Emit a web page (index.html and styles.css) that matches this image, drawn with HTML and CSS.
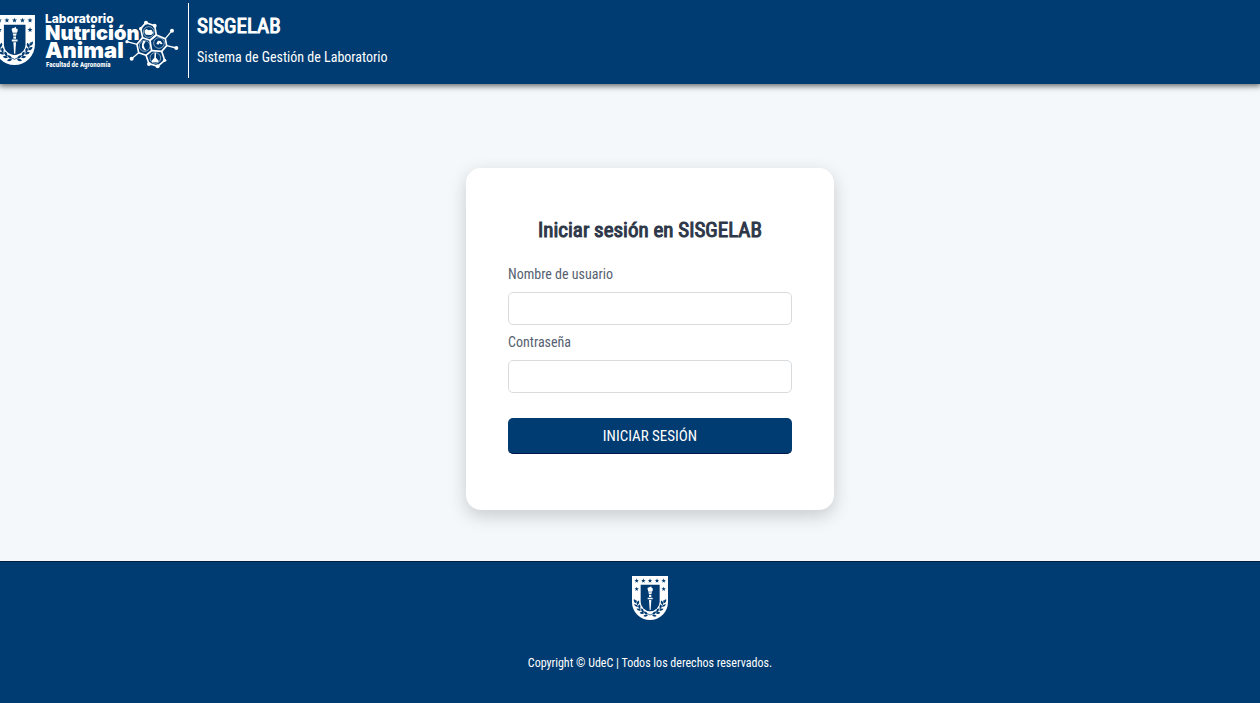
FILE: index.html
```html
<!DOCTYPE html>
<html lang="es">
<head>
    <meta charset="UTF-8">
    <meta name="viewport" content="width=device-width, initial-scale=1.0">
    <title>SISGELAB - Iniciar sesión</title>
    <link rel="stylesheet" href="styles.css">
</head>
<body>
    <header class="header">
        <svg class="header-logo" viewBox="0 0 180 75" role="img" aria-label="Laboratorio Nutrición Animal, Facultad de Agronomía">
            <defs>
                <path id="star" fill="#003b71" d="M0-7 1.7-2.2 6.7-2.2 2.7 1 4.1 6 0 3-4.1 6-2.7 1-6.7-2.2-1.7-2.2Z"/>
                <path id="leaf" fill="#003b71" d="M-7 0Q0-7 7 0 0 6-7 0Z"/>
                <symbol id="shield" viewBox="0 0 108 132">
                    <path fill="#fff" d="M0 0H108V78A54 54 0 0 1 0 78Z"/>
                    <path fill="#003b71" d="M26 26H83V77A28 28 0 0 1 26 77Z"/>
                    <use href="#star" x="14" y="14"/>
                    <use href="#star" x="34" y="14"/>
                    <use href="#star" x="54" y="14"/>
                    <use href="#star" x="75" y="14"/>
                    <use href="#star" x="95" y="14"/>
                    <use href="#star" x="14" y="39"/>
                    <use href="#star" x="95" y="39"/>
                    <!-- torch -->
                    <path fill="#fff" d="M47 40Q45 34 52 34L58 31Q56 36 62 37 64 44 60 47H49ZM49 49H60L58 55H51ZM51 57H58V63H51ZM47 65H62V70H47ZM51 72H58L56 102H53Z"/>
                    <!-- wreath -->
                    <g id="branch">
                        <use href="#leaf" transform="translate(9 76) rotate(60)"/>
                        <use href="#leaf" transform="translate(18 80) rotate(110)"/>
                        <use href="#leaf" transform="translate(12 89) rotate(35)"/>
                        <use href="#leaf" transform="translate(22 92) rotate(85)"/>
                        <use href="#leaf" transform="translate(20 101) rotate(20)"/>
                        <use href="#leaf" transform="translate(31 103) rotate(65)"/>
                        <use href="#leaf" transform="translate(30 111) rotate(5)"/>
                        <use href="#leaf" transform="translate(41 111) rotate(40)"/>
                        <use href="#leaf" transform="translate(41 119) rotate(-10)"/>
                        <path fill="none" stroke="#003b71" stroke-width="2" d="M12 72Q18 104 54 117"/>
                    </g>
                    <use href="#branch" transform="translate(108 0) scale(-1 1)"/>
                </symbol>
            </defs>
            <use href="#shield" x="-6" y="12" width="41" height="50"/>
            <g class="logo-text">
                <text x="45" y="20" font-size="12" font-weight="800">Laboratorio</text>
                <text x="45" y="37" font-size="20" font-weight="900">Nutrición</text>
                <text x="45" y="55" font-size="22" font-weight="900">Animal</text>
                <text class="logo-small" x="46" y="64" font-size="7" font-weight="700">Facultad de Agronomía</text>
            </g>
            <!-- molecule, drawn at three times its size -->
            <g transform="translate(0 -3) scale(.3333)">
                <g fill="none" stroke="#fff" stroke-width="5" stroke-linejoin="round">
                    <path d="M438 68 464 77 469 105 450 121 428 113 422 86Z"/>
                    <path d="M450 121 469 105 496 116 500 137 485 154 455 152"/>
                    <path d="M428 113 411 133 416 158 438 166 455 152 450 121"/>
                    <path d="M438 166 447 191 473 199 494 181 485 154"/>
                    <path stroke-width="4" d="M496 116 516 92M500 137 529 144M411 133 381 125M416 158 395 176"/>
                </g>
                <g fill="#fff">
                    <circle cx="438" cy="68" r="6"/>
                    <circle cx="464" cy="77" r="6"/>
                    <circle cx="422" cy="86" r="5"/>
                    <circle cx="516" cy="92" r="6"/>
                    <circle cx="529" cy="144" r="6"/>
                    <circle cx="381" cy="125" r="5"/>
                    <circle cx="395" cy="176" r="6"/>
                    <circle cx="447" cy="192" r="6"/>
                    <circle cx="473" cy="199" r="6"/>
                    <circle cx="494" cy="181" r="5"/>
                    <path d="M434 91 440 87 445 91 454 89 460 98 454 105 438 104 434 98Z"/>
                    <path d="M430 122 437 124 431 135 434 145 440 151 433 151 426 143 426 132Z"/>
                    <path d="M469 131 474 122 482 123 488 132 482 133 479 129 475 134Z"/>
                    <path d="M464 158H468V173L476 182 475 187H456L455 182 463 173Z"/>
                </g>
                <g fill="none" stroke="#fff" stroke-width="2" opacity=".8">
                    <circle cx="446" cy="96" r="16"/>
                    <circle cx="434" cy="138" r="16"/>
                    <circle cx="477" cy="129" r="16"/>
                    <circle cx="466" cy="174" r="16"/>
                </g>
            </g>
        </svg>
        <div class="header-title">
            <h1>SISGELAB</h1>
            <p>Sistema de Gestión de Laboratorio</p>
        </div>
    </header>

    <main class="content">
        <form class="login-card">
            <h2>Iniciar sesión en SISGELAB</h2>
            <label for="username">Nombre de usuario</label>
            <input type="text" id="username" name="username">
            <label for="password">Contraseña</label>
            <input type="password" id="password" name="password">
            <button type="submit">INICIAR SESIÓN</button>
        </form>
    </main>

    <footer class="footer">
        <svg class="footer-logo" viewBox="0 0 108 132" role="img" aria-label="Universidad de Concepción">
            <use href="#shield" width="108" height="132"/>
        </svg>
        <p>Copyright © UdeC | Todos los derechos reservados.</p>
    </footer>
</body>
</html>
```

FILE: styles.css
```css
* {
    box-sizing: border-box;
}

body {
    font-family: "Roboto Condensed", "Liberation Sans Narrow", Roboto, sans-serif;
    background: #f4f8fb;
    margin: 0;
    min-height: 100vh;
    display: flex;
    flex-direction: column;
}

h1,
h2 {
    font-size: 21px;
    font-weight: 400;
    line-height: 28px;
    -webkit-text-stroke: 1px;
}

.header {
    display: flex;
    background: #003b71;
    color: white;
    padding: 3px 0 6px;
    box-shadow: 0 1px 6px 1px rgba(0, 0, 0, 0.6);
}

.header-logo {
    width: 180px;
    height: 75px;
    margin-right: 8px;
}

.logo-text {
    font-family: Inter, sans-serif;
    fill: white;
}

.logo-small {
    font-family: "Roboto Condensed", "Liberation Sans Narrow", Roboto, sans-serif;
}

.header-title {
    border-left: 1px solid white;
    padding: 9px 8px 0;
}

.header-title h1 {
    margin: 0 0 7px;
}

.header-title p {
    font-size: 14px;
    line-height: 20px;
    margin: 0;
}

.content {
    flex: 1;
    display: flex;
    justify-content: center;
    align-items: flex-start;
    padding: 84px 0 50px 40px;
}

.login-card {
    display: flex;
    flex-direction: column;
    width: 368px;
    background: white;
    border-radius: 15px;
    padding: 48px 42px 56px;
    box-shadow: 0 6px 18px rgba(0, 0, 0, 0.18);
}

.login-card h2 {
    color: #2d3748;
    text-align: center;
    margin: 0 0 20px;
}

.login-card label {
    color: #566170;
    font-size: 14px;
    line-height: 20px;
    margin-bottom: 8px;
}

.login-card input {
    height: 33px;
    border: 1px solid #d9dcdf;
    border-radius: 5px;
    padding: 0 10px;
    font: inherit;
    margin-bottom: 7px;
}

.login-card button {
    height: 36px;
    background: #003b71;
    color: white;
    border: none;
    border-bottom: 1px solid #00194d;
    border-radius: 5px;
    font-family: inherit;
    font-size: 15px;
    margin-top: 18px;
    cursor: pointer;
}

.footer {
    display: flex;
    flex-direction: column;
    align-items: center;
    background: #003b71;
    color: white;
    border-top: 1px solid #001f3f;
    padding: 14px 0 31px 40px;
}

.footer-logo {
    width: 36px;
    height: 44px;
    margin-bottom: 34px;
}

.footer p {
    font-size: 12px;
    line-height: 18px;
    margin: 0;
}
```
